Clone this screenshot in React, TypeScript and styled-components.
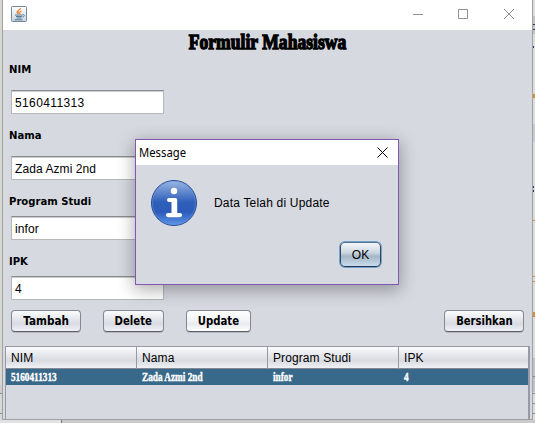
import React from "react";
import styled, { createGlobalStyle, css } from "styled-components";

const Global = createGlobalStyle`
  * { box-sizing: border-box; }
  body { margin: 0; overflow: hidden; background: #d3d2cf; }
`;

const Desktop = styled.div`
  position: relative;
  width: 535px;
  height: 423px;
  overflow: hidden;
  display: grid;
  grid-template-columns: 2px 531px 2px;
  grid-template-rows: 420px 3px;
  font: 12px "Liberation Sans", Arial, sans-serif;
  color: #000;
`;
const LeftStrip = styled.div`
  background: linear-gradient(#d9d8d0 0 385px, #cfcfca 385px 393px, #8c8c8c 393px 394px, #d8d8d4 394px 413px, #8c8c8c 413px 414px, #d8d8d8 414px);
`;
const BottomStrip = styled.div`
  grid-column: 1 / -1;
  background: linear-gradient(90deg, #e2e2e2 0 61px, #777 61px 62px, #cbcaca 62px);
`;

const Window = styled.div`
  display: flex;
  flex-direction: column;
  height: 420px;
  border: 1px solid #a0a1a3;
  border-top: 0;
  background: #d6d9e0;
`;
const TitleBar = styled.div`
  flex: none;
  height: 30px;
  background: #fff;
  display: flex;
  justify-content: space-between;
  padding: 6px 17px 0 8px;
`;
const WindowControls = styled.svg`
  width: 103px;
  height: 14px;
  margin-top: 2px;
  fill: none;
  stroke: #919191;
`;

const Stretch = styled.span<{ $x: number; $origin?: string }>`
  display: inline-block;
  white-space: pre;
  transform: scaleX(${(p) => p.$x});
  transform-origin: ${(p) => p.$origin ?? "left"} center;
`;

const Heading = styled.h1`
  margin: 0;
  height: 31px;
  text-align: center;
  font: bold 20px/25px "Liberation Serif", serif;
  -webkit-text-stroke: 1.3px #000;
`;

const Form = styled.div`
  display: flex;
  flex-direction: column;
  align-items: flex-start;
  padding-left: 6px;
`;
const Field = styled.label<{ $gap: number; $after: number }>`
  display: flex;
  flex-direction: column;
  gap: ${(p) => p.$gap}px;
  margin-bottom: ${(p) => p.$after}px;
`;
const boldText = css`
  font-family: "DejaVu Sans", sans-serif;
  font-weight: bold;
`;
const FieldName = styled.span`
  ${boldText}
  font-size: 11px;
  line-height: 18px;
  height: 16px;
`;
const Input = styled.span<{ $tracking: number }>`
  margin-left: 2px;
  width: 153px;
  height: 24px;
  padding-left: 3px;
  font-size: 12px;
  line-height: 25px;
  letter-spacing: ${(p) => p.$tracking}px;
  background: #fff;
  border: 1px solid #b5b7bb;
  border-top-color: #8b8d90;
  box-shadow: inset 0 1px #c9cacc;
`;

const Buttons = styled.div`
  display: flex;
  padding: 0 8px;
  gap: 22px;
  height: 36px;
`;
const Button = styled.span<{ $w: number; $light?: boolean; $push?: boolean }>`
  ${boldText}
  width: ${(p) => p.$w}px;
  height: 22px;
  margin-left: ${(p) => (p.$push ? "auto" : "0")};
  border: 1px solid #858891;
  border-bottom-color: #5d6068;
  border-radius: 4px;
  box-shadow: 0 1px 0 #b6b9c0;
  background: ${(p) =>
    p.$light
      ? "linear-gradient(#fff, #f2f3f6 50%, #e9ebef 65%, #fff)"
      : "linear-gradient(#fafbfc, #e3e5ea 45%, #d8dbe2 65%, #f0f2f7)"};
  display: flex;
  justify-content: center;
  font-size: 11.5px;
  line-height: 20px;
`;

const Table = styled.div`
  flex: 1;
  margin: 0 2px;
  border: 1px solid #989ba5;
  border-right-width: 2px;
  border-bottom: 0;
`;
const Row = styled.div`
  display: grid;
  grid-template-columns: 131px 131px 131px 1fr;
`;
const HeaderRow = styled(Row)`
  height: 22px;
  border-bottom: 1px solid #858993;
  background: linear-gradient(#fafbfc, #e2e4e9 45%, #d8dbe1 65%, #eff1f5);
`;
const HeaderCell = styled.span`
  padding-left: 5px;
  line-height: 22px;
  font-size: 12px;
  letter-spacing: 0.1px;
  border-right: 1px solid #9598a0;
  &:last-child { border-right: 0; }
`;
const SelectedRow = styled(Row)`
  height: 16px;
  background: #39698a;
`;
const Cell = styled.span`
  padding-left: 5px;
  color: #fff;
  font: bold 12px/16px "Liberation Serif", serif;
  -webkit-text-stroke: 0.4px #fff;
`;

const Dialog = styled.div`
  position: absolute;
  left: 135px;
  top: 139px;
  width: 264px;
  height: 146px;
  border: 1px solid #8058b4;
  background: #d6d9e0;
  box-shadow: 0 4px 16px 1px rgba(0, 0, 0, 0.32);
  display: flex;
  flex-direction: column;
`;
const DialogBar = styled.div`
  height: 25px;
  padding: 0 10px 0 3px;
  background: #fff;
  display: flex;
  justify-content: space-between;
  align-items: center;
  font: 12px/24px "Noto Sans", sans-serif;
`;
const DialogClose = styled.svg`
  width: 11px;
  height: 11px;
  margin-top: -1px;
  stroke: #000;
`;
const DialogBody = styled.div`
  display: flex;
  gap: 16px;
  padding: 14px 0 0 14px;
  height: 77px;
`;
const Message = styled.span`
  line-height: 48px;
  letter-spacing: 0.19px;
  white-space: nowrap;
`;
const DialogFooter = styled.div`
  display: flex;
  justify-content: flex-end;
  padding-right: 17px;
`;
const OkButton = styled.span`
  width: 41px;
  height: 25px;
  border: 1px solid #2f4a66;
  border-color: #52718f #34475d #25364a;
  border-radius: 5px;
  box-shadow: 0 0 0 1px #73a4d1;
  background: linear-gradient(#f4f7fa, #cbd6df 42%, #a5b7c8 58%, #c8dcec);
  text-align: center;
  font-size: 12px;
  line-height: 24px;
`;

const EditorEdge = styled.svg`
  width: 2px;
  height: 420px;
`;

const JavaIcon = () => (
  <svg width="16" height="16" viewBox="0 0 16 16">
    <defs>
      <linearGradient id="java" x2="0" y2="1">
        <stop stopColor="#fff" />
        <stop offset="1" stopColor="#cbd5de" />
      </linearGradient>
    </defs>
    <rect x=".5" y=".5" width="15" height="15" rx="1" fill="url(#java)" stroke="#6f8797" />
    <path d="M10 2.5C7 4 6 5 8 7.5M10.5 5C8.5 5.5 8.5 6.5 9 8M7 4.8C5.5 6 6 6.8 7 8" fill="none" stroke="#ec8130" strokeWidth="1.1" />
    <path d="M4 9h7.5M5 10.5h6M5.5 12h5M3.5 13.8h8M11.5 8.7c2.5-.5 2.5 2 0 2.3" fill="none" stroke="#44708f" strokeWidth=".9" />
  </svg>
);

const InfoIcon = () => (
  <svg width="48" height="48" viewBox="0 0 48 48">
    <defs>
      <linearGradient id="info" x2="0" y2="1">
        <stop stopColor="#9db8e4" />
        <stop offset=".25" stopColor="#6288cd" />
        <stop offset=".48" stopColor="#2f5fba" />
        <stop offset=".7" stopColor="#2c5bb9" />
        <stop offset="1" stopColor="#6096eb" />
      </linearGradient>
    </defs>
    <circle cx="24" cy="24" r="22.5" fill="url(#info)" stroke="#244b94" />
    <circle cx="24" cy="24" r="21.5" fill="none" stroke="#6b95df" strokeOpacity=".5" />
    <circle cx="24" cy="12" r="3.2" fill="#fff" />
    <path d="M19 19h6.5q1.7 0 1.7 1.7V34H30a2 2 0 0 1 0 4.2H18a2 2 0 0 1 0-4.2h3.5V23H19a2 2 0 0 1 0-4z" fill="#fff" />
  </svg>
);

const fields = [
  { name: "NIM", value: "5160411313", gap: 13, after: 13, tracking: 0.38 },
  { name: "Nama", value: "Zada Azmi 2nd", gap: 13, after: 13, tracking: 0.08 },
  { name: "Program Studi", value: "infor", gap: 7, after: 13, tracking: 0.1 },
  { name: "IPK", value: "4", gap: 7, after: 10, tracking: 0 },
];

export default function App() {
  return (
    <>
      <Global />
      <Desktop>
        <LeftStrip />
        <Window>
          <TitleBar>
            <JavaIcon />
            <WindowControls viewBox="0 0 103 14">
              <path d="M1 6.5h10M46.5 1.5h9v9h-9zM92 1l10 10M102 1l-10 10" />
            </WindowControls>
          </TitleBar>
          <Heading>
            <Stretch $x={0.88} $origin="center">Formulir Mahasiswa</Stretch>
          </Heading>
          <Form>
            {fields.map((f) => (
              <Field key={f.name} $gap={f.gap} $after={f.after}>
                <FieldName>
                  <Stretch $x={0.915}>{f.name}</Stretch>
                </FieldName>
                <Input $tracking={f.tracking}>{f.value}</Input>
              </Field>
            ))}
          </Form>
          <Buttons>
            <Button $w={70}><Stretch $x={0.91} $origin="center">Tambah</Stretch></Button>
            <Button $w={61}><Stretch $x={0.88} $origin="center">Delete</Stretch></Button>
            <Button $w={65} $light><Stretch $x={0.88} $origin="center">Update</Stretch></Button>
            <Button $w={80} $push><Stretch $x={0.87} $origin="center">Bersihkan</Stretch></Button>
          </Buttons>
          <Table>
            <HeaderRow>
              {["NIM", "Nama", "Program Studi", "IPK"].map((h) => (
                <HeaderCell key={h}>{h}</HeaderCell>
              ))}
            </HeaderRow>
            <SelectedRow>
              {["5160411313", "Zada Azmi 2nd", "infor", "4"].map((v) => (
                <Cell key={v}><Stretch $x={0.77}>{v}</Stretch></Cell>
              ))}
            </SelectedRow>
          </Table>
        </Window>
        <EditorEdge viewBox="0 0 2 420">
          <path fill="#dedddc" d="M0 0h2v420H0z" />
          <path fill="#c3c3c4" d="M0 16h2v18H0zM0 358h2v34H0z" />
          <path fill="#c6cbd4" d="M0 124h2v18H0z" />
          <path fill="#24386b" d="M0 24h2v1H0zM0 29h2v1H0zM0 46h1v2H0zM0 186h1v2H0zM0 190h1v2H0z" />
          <path fill="#d8902f" d="M0 94h2v4H0zM0 220h2v1H0zM0 276h2v1H0zM0 281h2v1H0zM0 312h2v5H0z" />
          <path fill="#858585" d="M0 376h2v1H0zM0 393h2v1H0zM0 403h2v1H0zM0 413h2v1H0z" />
        </EditorEdge>
        <BottomStrip />
        <Dialog>
          <DialogBar>
            <Stretch $x={0.94}>Message</Stretch>
            <DialogClose viewBox="0 0 11 11">
              <path d="M.5.5l10 10M10.5.5l-10 10" />
            </DialogClose>
          </DialogBar>
          <DialogBody>
            <InfoIcon />
            <Message>Data Telah di Update</Message>
          </DialogBody>
          <DialogFooter>
            <OkButton>OK</OkButton>
          </DialogFooter>
        </Dialog>
      </Desktop>
    </>
  );
}
